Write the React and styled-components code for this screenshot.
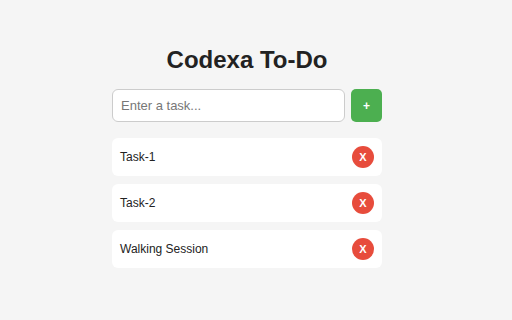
import React, { useState } from "react";
import styled, { createGlobalStyle } from "styled-components";

const Global = createGlobalStyle`
  html, body { margin: 0; padding: 0; background: #f5f5f5; }
  body { font-family: "Liberation Sans", Arial, sans-serif; color: #222; }
  * { box-sizing: border-box; }
`;

const Page = styled.div`
  display: flex;
  justify-content: center;
  padding: 46px 18px 0 0;
  min-height: 320px;
`;

const Container = styled.div`
  width: 270px;
  display: flex;
  flex-direction: column;
`;

const Title = styled.h1`
  margin: 0 0 16px;
  font-size: 24px;
  line-height: 27px;
  font-weight: 700;
  text-align: center;
  color: #222;
`;

const InputRow = styled.div`
  display: flex;
  gap: 6px;
  margin-bottom: 16px;
`;

const TaskInput = styled.input`
  flex: 1;
  height: 33px;
  padding: 0 8px;
  border: 1px solid #ccc;
  border-radius: 6px;
  background: #fff;
  font-family: "Liberation Sans", Arial, sans-serif;
  font-size: 13px;
  color: #222;
  outline: none;
  &::placeholder { color: #777; }
`;

const AddButton = styled.button`
  width: 31px;
  height: 33px;
  border: none;
  border-radius: 5px;
  background: #4caf50;
  color: #fff;
  font-family: "Liberation Sans", Arial, sans-serif;
  font-size: 12px;
  font-weight: 700;
  padding: 0;
  cursor: pointer;
`;

const List = styled.ul`
  list-style: none;
  margin: 0;
  padding: 0;
  display: flex;
  flex-direction: column;
  gap: 8px;
`;

const Item = styled.li`
  height: 38px;
  display: flex;
  align-items: center;
  justify-content: space-between;
  padding: 0 8px 0 8px;
  background: #fff;
  border-radius: 6px;
  font-size: 12px;
  color: #222;
`;

const DeleteButton = styled.button`
  width: 22px;
  height: 22px;
  border-radius: 50%;
  border: none;
  background: #e74c3c;
  color: #fff;
  font-family: "Liberation Sans", Arial, sans-serif;
  font-size: 11px;
  font-weight: 700;
  padding: 0;
  display: flex;
  align-items: center;
  justify-content: center;
  cursor: pointer;
`;

export default function App() {
  const [tasks, setTasks] = useState(["Task-1", "Task-2", "Walking Session"]);
  const [value, setValue] = useState("");
  const add = () => {
    if (!value.trim()) return;
    setTasks([...tasks, value.trim()]);
    setValue("");
  };
  return (
    <>
      <Global />
      <Page>
        <Container>
          <Title>Codexa To-Do</Title>
          <InputRow>
            <TaskInput
              placeholder="Enter a task..."
              value={value}
              onChange={(e) => setValue(e.target.value)}
            />
            <AddButton onClick={add}>+</AddButton>
          </InputRow>
          <List>
            {tasks.map((t, i) => (
              <Item key={i}>
                <span>{t}</span>
                <DeleteButton onClick={() => setTasks(tasks.filter((_, j) => j !== i))}>X</DeleteButton>
              </Item>
            ))}
          </List>
        </Container>
      </Page>
    </>
  );
}
